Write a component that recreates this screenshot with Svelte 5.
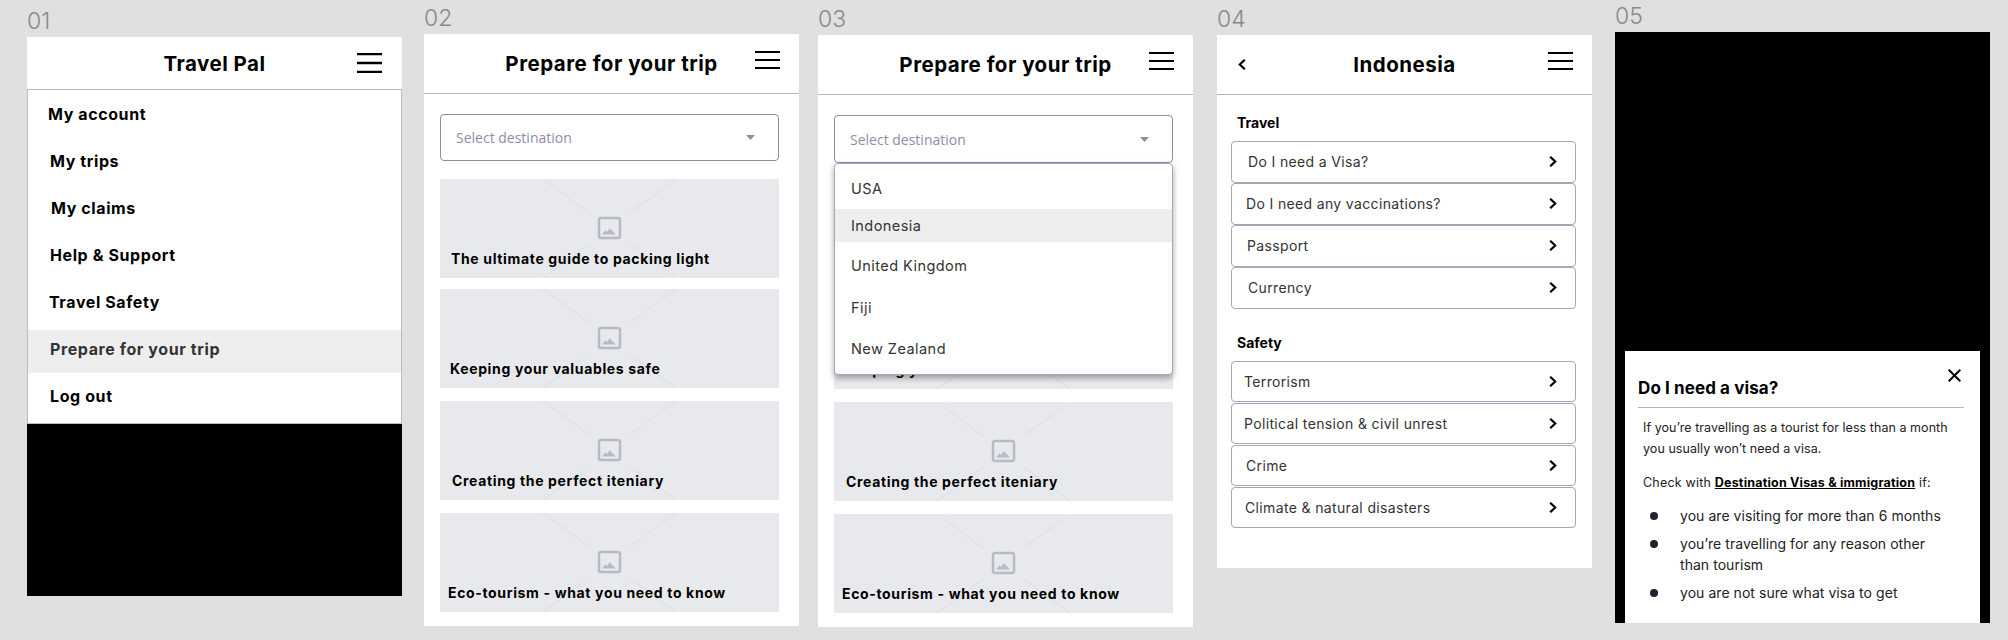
<script>
  const menu = [
    { label: 'My account', left: 20 },
    { label: 'My trips', left: 22 },
    { label: 'My claims', left: 23 },
    { label: 'Help & Support', left: 22 },
    { label: 'Travel Safety', left: 21 },
    { label: 'Prepare for your trip', left: 22, active: true },
    { label: 'Log out', left: 22 }
  ];

  const guides = [
    { title: 'The ultimate guide to packing light', left: 11, top: 0 },
    { title: 'Keeping your valuables safe', left: 10, top: 11 },
    { title: 'Creating the perfect iteniary', left: 12, top: 13 },
    { title: 'Eco-tourism - what you need to know', left: 8, top: 13 }
  ];

  const destinations = [
    { name: 'USA', height: 42 },
    { name: 'Indonesia', height: 33, active: true },
    { name: 'United Kingdom', height: 46 },
    { name: 'Fiji', height: 38 },
    { name: 'New Zealand', height: 44 }
  ];

  const sections = [
    {
      title: 'Travel',
      rows: [
        { label: 'Do I need a Visa?', left: 16 },
        { label: 'Do I need any vaccinations?', left: 14 },
        { label: 'Passport', left: 15 },
        { label: 'Currency', left: 16 }
      ]
    },
    {
      title: 'Safety',
      rows: [
        { label: 'Terrorism', left: 12 },
        { label: 'Political tension & civil unrest', left: 12 },
        { label: 'Crime', left: 14 },
        { label: 'Climate & natural disasters', left: 13 }
      ]
    }
  ];
</script>

{#snippet burger()}
  <svg class="burger" width="25" height="18" viewBox="0 0 25 18" preserveAspectRatio="none" aria-hidden="true">
    <path d="M0 1h25M0 9h25M0 17h25" stroke="#000" stroke-width="2.200" fill="none" />
  </svg>
{/snippet}

{#snippet select()}
  <div class="select">
    <span>Select destination</span>
    <svg width="9" height="5" viewBox="0 0 9 5" aria-hidden="true"><path d="M0 0h9L4.500 5z" fill="#8d8ea5" /></svg>
  </div>
{/snippet}

{#snippet cards()}
  <div class="cards">
    {#each guides as guide}
      <div class="card" style="margin-top: {guide.top}px; padding-left: {guide.left}px">
        <svg class="placeholder" width="339" height="99" viewBox="0 0 339 99" aria-hidden="true">
          <path d="M103 0l47 34.500M236 0l-47 34.500M103 99l47-34.500M236 99l-47-34.500" stroke="#dcdde6" fill="none" />
          <rect x="159" y="39" width="21" height="20" rx="2" stroke="#b9bac8" stroke-width="2.500" fill="none" />
          <path d="M162 55.500l3.500-4.200 1.600 1.600 2.700-3.600 6 6.200z" fill="#b9bac8" />
        </svg>
        <span>{guide.title}</span>
      </div>
    {/each}
  </div>
{/snippet}

<div class="board">
  <section class="col c1">
    <div class="num">01</div>
    <div class="panel dark">
      <header class="bar">
        <span></span>
        <h1>Travel Pal</h1>
        {@render burger()}
      </header>
      <ul class="menu">
        {#each menu as item}
          <li class:active={item.active} style="padding-left: {item.left}px">{item.label}</li>
        {/each}
      </ul>
    </div>
  </section>

  <section class="col c2">
    <div class="num">02</div>
    <div class="panel">
      <header class="bar">
        <span></span>
        <h1>Prepare for your trip</h1>
        {@render burger()}
      </header>
      <div class="body">
        {@render select()}
        {@render cards()}
      </div>
    </div>
  </section>

  <section class="col c3">
    <div class="num">03</div>
    <div class="panel">
      <header class="bar">
        <span></span>
        <h1>Prepare for your trip</h1>
        {@render burger()}
      </header>
      <div class="body">
        {@render select()}
        <ul class="dropdown">
          {#each destinations as place}
            <li class:active={place.active} style="height: {place.height}px">{place.name}</li>
          {/each}
        </ul>
        {@render cards()}
      </div>
    </div>
  </section>

  <section class="col c4">
    <div class="num">04</div>
    <div class="panel">
      <header class="bar">
        <svg class="back" width="8" height="11" viewBox="0 0 8 11" aria-hidden="true">
          <path d="M6.800 .8L1.800 5.500l5 4.700" stroke="#000" stroke-width="2.200" fill="none" />
        </svg>
        <h1>Indonesia</h1>
        {@render burger()}
      </header>
      <div class="topics">
        {#each sections as section}
          <h2>{section.title}</h2>
          <div class="rows">
            {#each section.rows as row}
              <div class="row" style="padding-left: {row.left}px">
                <span>{row.label}</span>
                <svg width="8" height="11" viewBox="0 0 8 11" aria-hidden="true">
                  <path d="M1.200 .8L6.200 5.500l-5 4.700" stroke="#000" stroke-width="2.200" fill="none" />
                </svg>
              </div>
            {/each}
          </div>
        {/each}
      </div>
    </div>
  </section>

  <section class="col c5">
    <div class="num">05</div>
    <div class="panel dark">
      <div class="modal">
        <div class="modal-head">
          <h3>Do I need a visa?</h3>
          <svg width="13" height="13" viewBox="0 0 13 13" aria-hidden="true">
            <path d="M.7 .7l11.600 11.600M12.300 .7L.7 12.300" stroke="#000" stroke-width="2" fill="none" />
          </svg>
        </div>
        <p>If you’re travelling as a tourist for less than a month you usually won’t need a visa.</p>
        <p class="check">Check with <a href="#visas">Destination Visas &amp; immigration</a> if:</p>
        <ul class="bullets">
          <li>you are visiting for more than 6 months</li>
          <li>you’re travelling for any reason other than tourism</li>
          <li>you are not sure what visa to get</li>
        </ul>
      </div>
    </div>
  </section>
</div>

<style>
  :global(body) {
    background: #e0e0e0;
    font-family: Inter, "Liberation Sans", sans-serif;
    color: #000;
  }
  ul {
    list-style: none;
    margin: 0;
    padding: 0;
  }
  .board {
    display: flex;
    align-items: flex-start;
    height: 640px;
    padding-left: 27px;
    overflow: hidden;
  }
  .col {
    width: 375px;
    flex: none;
  }
  .c1 { margin-right: 22px; padding-top: 9px; }
  .c2 { margin-right: 19px; padding-top: 6px; }
  .c3 { margin-right: 24px; padding-top: 7px; }
  .c4 { margin-right: 23px; padding-top: 7px; }
  .c5 { padding-top: 4px; }
  .num {
    height: 28px;
    font-size: 23px;
    line-height: 24px;
    font-weight: 300;
    color: #8a8a8a;
  }
  .panel {
    background: #fff;
  }
  .c1 .panel { height: 559px; }
  .c2 .panel { height: 592px; }
  .c3 .panel { height: 592px; }
  .c4 .panel { height: 533px; }
  .dark { background: #000; }
  .c5 .panel {
    height: 591px;
    padding: 319px 10px 0;
    box-sizing: border-box;
  }

  /* Header bar */
  .bar {
    display: grid;
    grid-template-columns: 1fr auto 1fr;
    height: 60px;
    box-sizing: border-box;
    border-bottom: 1px solid #b5b5b5;
    background: #fff;
  }
  .c1 .bar { height: 53px; }
  .bar h1 {
    margin: 0;
    align-self: center;
    font-size: 20.500px;
    font-weight: 700;
    letter-spacing: 0.5px;
    white-space: nowrap;
  }
  .burger {
    justify-self: end;
    margin: 17px 19px 0 0;
  }
  .c1 .burger {
    height: 20px;
    margin: 16px 20px 0 0;
  }
  .back {
    align-self: center;
    margin-left: 21px;
  }

  /* Side menu */
  .menu {
    height: 334px;
    box-sizing: border-box;
    padding-top: 5px;
    background: #fff;
    border: 1px solid #bbb;
    border-top: none;
  }
  .menu li {
    display: flex;
    align-items: center;
    height: 43px;
    margin-bottom: 4px;
    padding-bottom: 6px;
    box-sizing: border-box;
    font-size: 16px;
    font-weight: 700;
    letter-spacing: 0.6px;
  }
  .menu li.active {
    background: #eee;
    color: #333;
  }

  /* Select and guide cards */
  .body {
    position: relative;
    padding: 20px 20px 0 16px;
  }
  .select {
    display: flex;
    align-items: center;
    justify-content: space-between;
    height: 47px;
    box-sizing: border-box;
    padding: 0 23px 0 15px;
    border: 1px solid #8d8ea5;
    border-radius: 4px;
    font-family: "Open Sans", sans-serif;
    font-size: 14px;
    color: #8d8ea5;
  }
  .c3 .select { height: 48px; border-width: 1.500px; }
  .cards {
    margin-top: 18px;
  }
  .c3 .cards { margin-top: 17px; }
  .card {
    position: relative;
    display: flex;
    align-items: flex-end;
    height: 99px;
    box-sizing: border-box;
    padding-bottom: 10px;
    background: #e8e9ed;
    font-size: 14px;
    font-weight: 700;
    letter-spacing: 0.65px;
    line-height: 18px;
  }
  .card span { position: relative; }
  .placeholder {
    position: absolute;
    top: 0;
    left: 0;
  }
  .dropdown {
    position: absolute;
    z-index: 1;
    top: 68px;
    left: 16px;
    right: 20px;
    height: 212px;
    box-sizing: border-box;
    padding-top: 3px;
    background: #fff;
    border: 1px solid #a5a6b8;
    border-radius: 4px;
    box-shadow: 0 3px 6px rgba(0, 0, 0, 0.35);
    font-size: 14.500px;
    letter-spacing: 0.45px;
    color: #333;
  }
  .dropdown li {
    display: flex;
    align-items: center;
    padding-left: 16px;
  }
  .dropdown li.active { background: #eee; }

  /* Indonesia topics */
  .topics {
    padding: 19px 16px 0 14px;
  }
  .topics h2 {
    margin: 0 0 10px 6px;
    font-size: 14px;
    line-height: 17px;
    font-weight: 700;
  }
  .rows {
    display: flex;
    flex-direction: column;
    gap: 0.500px;
    margin-bottom: 25px;
  }
  .row {
    display: flex;
    align-items: center;
    justify-content: space-between;
    height: 41.500px;
    box-sizing: border-box;
    padding-right: 18px;
    border: 1px solid #a5a6b8;
    border-radius: 4px;
    font-size: 14px;
    color: #333;
    letter-spacing: 0.35px;
  }

  /* Visa modal */
  .modal {
    height: 272px;
    box-sizing: border-box;
    padding: 0 16px 0 13px;
    background: #fff;
    font-size: 12.500px;
    line-height: 21px;
    color: #222;
    letter-spacing: 0.05px;
  }
  .modal-head {
    display: flex;
    justify-content: space-between;
    height: 56px;
    border-bottom: 1px solid #b5b5b5;
  }
  .modal-head h3 {
    margin: 27px 0 0;
    font-size: 17px;
    line-height: 20px;
    font-weight: 700;
    letter-spacing: 0.1px;
    color: #000;
  }
  .modal-head svg {
    margin: 18px 3px 0 0;
  }
  .modal p {
    margin: 9px 10px 0 5px;
  }
  .modal .check {
    margin-top: 13px;
    letter-spacing: 0.2px;
  }
  .modal a {
    font-weight: 700;
    color: #000;
    text-decoration: underline;
  }
  .bullets {
    margin-top: 12px;
    padding: 0 22px 0 42px;
    font-size: 14px;
  }
  .bullets li {
    position: relative;
    margin-bottom: 7px;
  }
  .bullets li::before {
    content: '';
    position: absolute;
    left: -30px;
    top: 6.500px;
    width: 8px;
    height: 8px;
    border-radius: 50%;
    background: #1f2233;
  }
</style>
